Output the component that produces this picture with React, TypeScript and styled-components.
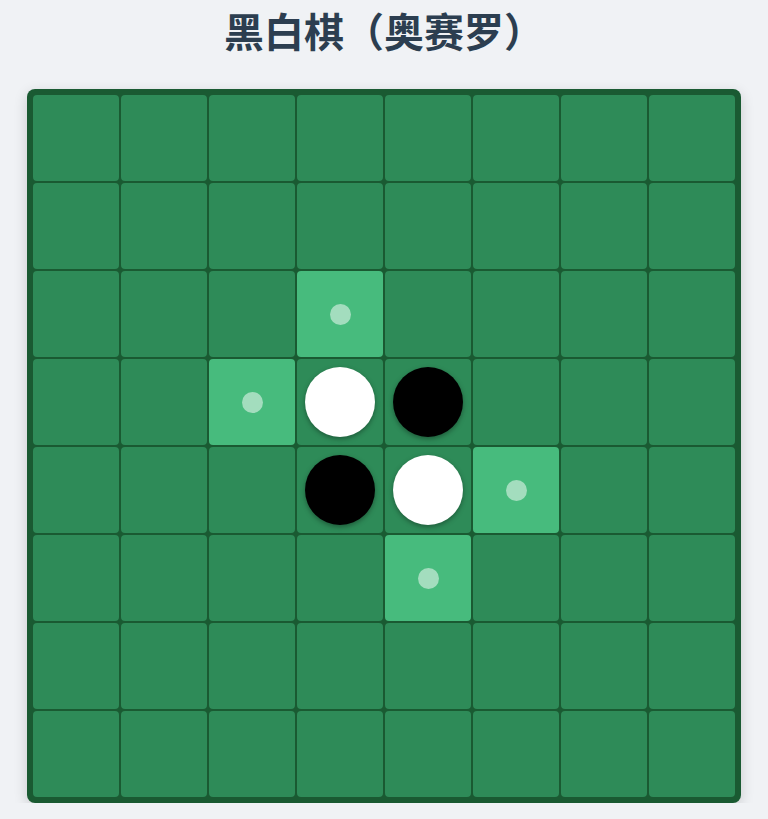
import React, { useState } from "react";
import styled, { createGlobalStyle } from "styled-components";

const GlobalStyle = createGlobalStyle`
  body {
    margin: 0;
    background: #f0f2f5;
    font-family: "Noto Sans CJK SC", "Noto Sans", sans-serif;
  }
`;

type Piece = "black" | "white" | null;

const SIZE = 8;

const Page = styled.div`
  display: flex;
  flex-direction: column;
  align-items: center;
  padding-top: 6px;
`;

const Title = styled.h1`
  margin: 0 0 35px;
  font-size: 40px;
  line-height: 48px;
  font-weight: 700;
  color: #2c3e50;
`;

const Board = styled.div`
  display: grid;
  grid-template-columns: repeat(${SIZE}, 86px);
  grid-auto-rows: 86px;
  gap: 2px;
  padding: 6px;
  background: #1a5a32;
  border-radius: 8px;
  box-shadow: 0 4px 14px rgba(0, 0, 0, 0.16);
`;

const Cell = styled.div<{ $hint: boolean }>`
  display: flex;
  align-items: center;
  justify-content: center;
  border-radius: 4px;
  background: ${(p) => (p.$hint ? "#47bb7d" : "#2e8b58")};
  cursor: ${(p) => (p.$hint ? "pointer" : "default")};
`;

const Disc = styled.div<{ $color: "black" | "white" }>`
  width: 70px;
  height: 70px;
  border-radius: 50%;
  background: ${(p) => (p.$color === "black" ? "#000" : "#fff")};
  box-shadow: 0 2px 5px rgba(0, 0, 0, 0.35);
`;

const Dot = styled.div`
  width: 21px;
  height: 21px;
  border-radius: 50%;
  background: rgba(255, 255, 255, 0.5);
`;

const DIRS = [
  [-1, -1], [-1, 0], [-1, 1],
  [0, -1], [0, 1],
  [1, -1], [1, 0], [1, 1],
];

function startBoard(): Piece[][] {
  const b: Piece[][] = Array.from({ length: SIZE }, () => Array(SIZE).fill(null));
  b[3][3] = "white";
  b[3][4] = "black";
  b[4][3] = "black";
  b[4][4] = "white";
  return b;
}

// discs that would flip if `turn` played at (r, c)
function flips(board: Piece[][], r: number, c: number, turn: "black" | "white") {
  if (board[r][c]) return [];
  const other = turn === "black" ? "white" : "black";
  const out: [number, number][] = [];
  for (const [dr, dc] of DIRS) {
    const line: [number, number][] = [];
    let y = r + dr;
    let x = c + dc;
    while (y >= 0 && y < SIZE && x >= 0 && x < SIZE && board[y][x] === other) {
      line.push([y, x]);
      y += dr;
      x += dc;
    }
    if (line.length && y >= 0 && y < SIZE && x >= 0 && x < SIZE && board[y][x] === turn) {
      out.push(...line);
    }
  }
  return out;
}

export default function App() {
  const [board, setBoard] = useState<Piece[][]>(startBoard);
  const [turn, setTurn] = useState<"black" | "white">("black");

  const play = (r: number, c: number) => {
    const f = flips(board, r, c, turn);
    if (!f.length) return;
    const next = board.map((row) => row.slice());
    next[r][c] = turn;
    f.forEach(([y, x]) => (next[y][x] = turn));
    setBoard(next);
    setTurn(turn === "black" ? "white" : "black");
  };

  return (
    <>
      <GlobalStyle />
      <Page>
        <Title>黑白棋（奥赛罗）</Title>
        <Board>
          {board.map((row, r) =>
            row.map((piece, c) => {
              const hint = !piece && flips(board, r, c, turn).length > 0;
              return (
                <Cell key={`${r}-${c}`} $hint={hint} onClick={() => play(r, c)}>
                  {piece && <Disc $color={piece} />}
                  {hint && <Dot />}
                </Cell>
              );
            })
          )}
        </Board>
      </Page>
    </>
  );
}
